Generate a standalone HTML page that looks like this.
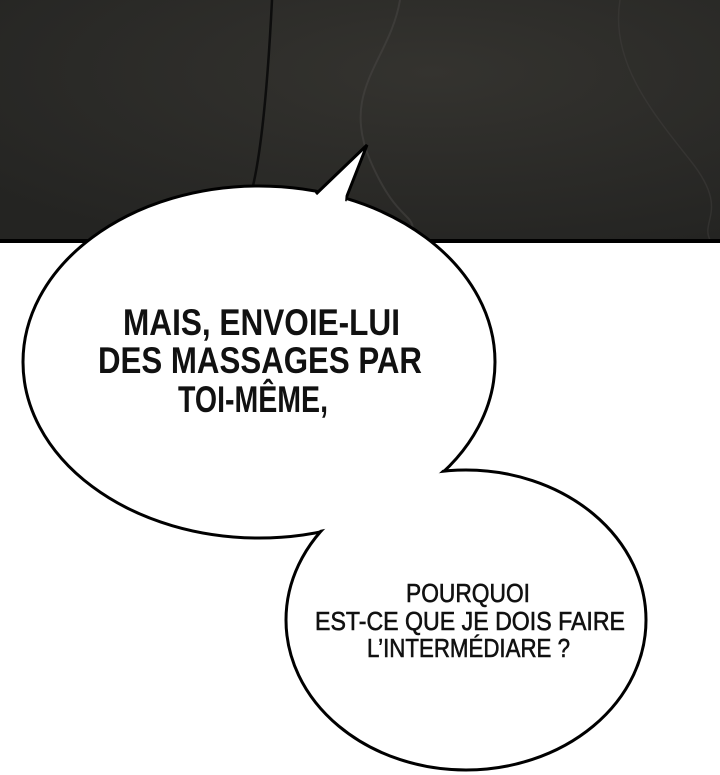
<!DOCTYPE html>
<html><head><style>
body{margin:0;width:720px;height:775px;overflow:hidden;background:#fff}
svg{display:block}
</style></head><body>
<svg width="720" height="775" viewBox="0 0 720 775">
<defs><radialGradient id="g" cx="0.6" cy="0.3" r="0.8"><stop offset="0" stop-color="#34332f"/><stop offset="1" stop-color="#242422"/></radialGradient></defs>
<rect x="0" y="0" width="720" height="241" fill="url(#g)"/>
<path d="M400 0 C390 60 340 90 370 160 S420 210 410 240" stroke="#4a4845" stroke-width="2" fill="none" opacity="0.5"/>
<path d="M620 0 C610 60 650 110 690 160 S700 220 710 240" stroke="#3f3e3b" stroke-width="1.5" fill="none" opacity="0.5"/>
<path d="M272 0 C268 80 262 150 252 190" stroke="#0d0d0d" stroke-width="2.5" fill="none"/>
<rect x="0" y="239" width="720" height="4" fill="#000"/>
<ellipse cx="259" cy="362" rx="236" ry="176" fill="#fff" stroke="#000" stroke-width="3"/>
<ellipse cx="466" cy="620" rx="180" ry="150" fill="#fff" stroke="#000" stroke-width="3"/>
<ellipse cx="259" cy="362" rx="234" ry="174" fill="#fff"/>
<ellipse cx="466" cy="620" rx="178" ry="148" fill="#fff"/>
<path d="M316 194 L367 145 L345 201" fill="#fff" stroke="#000" stroke-width="3" stroke-linejoin="miter"/>
<path d="M318 197 L345 203 L346 190 L330 190 Z" fill="#fff"/>
<g font-family="Liberation Sans, sans-serif" font-weight="bold" fill="#111" font-size="37">
<text x="123" y="335" textLength="277" lengthAdjust="spacingAndGlyphs">MAIS, ENVOIE-LUI</text>
<text x="98" y="373" textLength="324" lengthAdjust="spacingAndGlyphs">DES MASSAGES PAR</text>
<text x="178" y="412" textLength="150" lengthAdjust="spacingAndGlyphs">TOI-MÊME,</text>
</g>
<g font-family="Liberation Sans, sans-serif" fill="#111" font-size="26" stroke="#111" stroke-width="0.6">
<text x="406" y="602" textLength="124" lengthAdjust="spacingAndGlyphs">POURQUOI</text>
<text x="315" y="630" textLength="310" lengthAdjust="spacingAndGlyphs">EST-CE QUE JE DOIS FAIRE</text>
<text x="367" y="657" textLength="203" lengthAdjust="spacingAndGlyphs">L’INTERMÉDIARE ?</text>
</g>
</svg>
</body></html>
